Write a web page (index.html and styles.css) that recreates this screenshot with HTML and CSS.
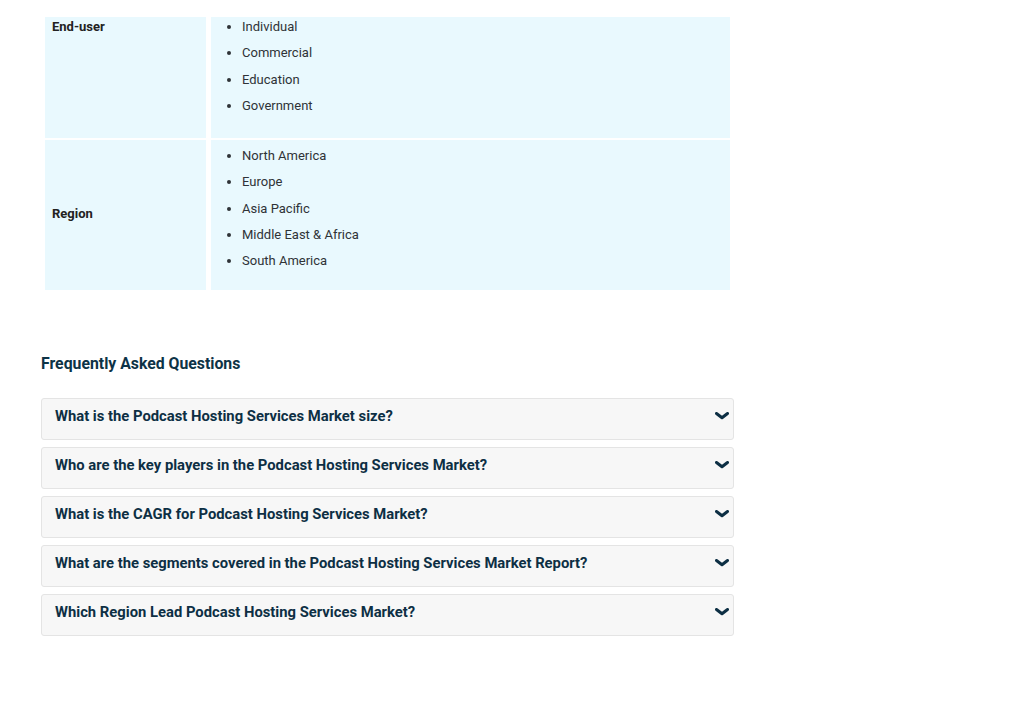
FILE: index.html
```html
<!DOCTYPE html>
<html lang="en">
<head>
    <meta charset="UTF-8">
    <meta name="viewport" content="width=device-width, initial-scale=1.0">
    <title>Podcast Hosting Services Market</title>
    <link rel="stylesheet" href="styles.css">
</head>
<body>
    <div class="content">
        <table class="segments">
            <tr class="first-row">
                <td class="label">End-user</td>
                <td class="values">
                    <ul>
                        <li>Individual</li>
                        <li>Commercial</li>
                        <li>Education</li>
                        <li>Government</li>
                    </ul>
                </td>
            </tr>
            <tr>
                <td class="label middle">Region</td>
                <td class="values">
                    <ul>
                        <li>North America</li>
                        <li>Europe</li>
                        <li>Asia Pacific</li>
                        <li>Middle East &amp; Africa</li>
                        <li>South America</li>
                    </ul>
                </td>
            </tr>
        </table>

        <h2 class="faq-title">Frequently Asked Questions</h2>

        <div class="faq">
            <div class="faq-item">
                <span>What is the Podcast Hosting Services Market size?</span>
                <svg class="chevron" width="14" height="8" viewBox="0 0 14 8"><polyline points="1.5,1.5 7,5.8 12.5,1.5" /></svg>
            </div>
            <div class="faq-item">
                <span>Who are the key players in the Podcast Hosting Services Market?</span>
                <svg class="chevron" width="14" height="8" viewBox="0 0 14 8"><polyline points="1.5,1.5 7,5.8 12.5,1.5" /></svg>
            </div>
            <div class="faq-item">
                <span>What is the CAGR for Podcast Hosting Services Market?</span>
                <svg class="chevron" width="14" height="8" viewBox="0 0 14 8"><polyline points="1.5,1.5 7,5.8 12.5,1.5" /></svg>
            </div>
            <div class="faq-item">
                <span>What are the segments covered in the Podcast Hosting Services Market Report?</span>
                <svg class="chevron" width="14" height="8" viewBox="0 0 14 8"><polyline points="1.5,1.5 7,5.8 12.5,1.5" /></svg>
            </div>
            <div class="faq-item">
                <span>Which Region Lead Podcast Hosting Services Market?</span>
                <svg class="chevron" width="14" height="8" viewBox="0 0 14 8"><polyline points="1.5,1.5 7,5.8 12.5,1.5" /></svg>
            </div>
        </div>
    </div>
</body>
</html>
```

FILE: styles.css
```css
body {
    margin: 0;
    font-family: Roboto, "Liberation Sans", Arial, sans-serif;
    background-color: #fff;
    color: #2f3337;
}
.content {
    width: 695px;
    padding: 15px 0 0 40px;
}
.segments {
    width: 695px;
    border-collapse: separate;
    border-spacing: 5px 2px;
    font-size: 13px;
}
.segments td {
    background-color: #e9f9fe;
    padding: 6px 7px 0;
    vertical-align: top;
}
.segments .first-row td {
    padding-top: 0;
    height: 121px;
}
.segments .label {
    width: 147px;
    font-weight: bold;
    color: #222;
    line-height: 20px;
}
.segments .label.middle {
    vertical-align: middle;
    padding-top: 0;
    padding-bottom: 2px;
}
.segments ul {
    margin: 0 0 19px;
    padding-left: 24px;
}
.segments li {
    line-height: 20px;
}
.segments li + li {
    margin-top: 6.3px;
}
.faq-title {
    margin: 61px 0 0 1px;
    font-size: 15.8px;
    line-height: 22px;
    color: #0d3346;
}
.faq {
    margin: 23px 1px 0 1px;
}
.faq-item {
    display: flex;
    align-items: center;
    justify-content: space-between;
    height: 34px;
    margin-bottom: 7px;
    padding: 0 4px 6px 13px;
    background-color: #f7f7f7;
    border: 1px solid #e4e4e4;
    border-radius: 3px;
    font-size: 14.8px;
    font-weight: bold;
    color: #0d2f44;
}
.chevron {
    fill: none;
    stroke: #0d2f44;
    stroke-width: 3;
    stroke-linecap: round;
    stroke-linejoin: round;
}
```
